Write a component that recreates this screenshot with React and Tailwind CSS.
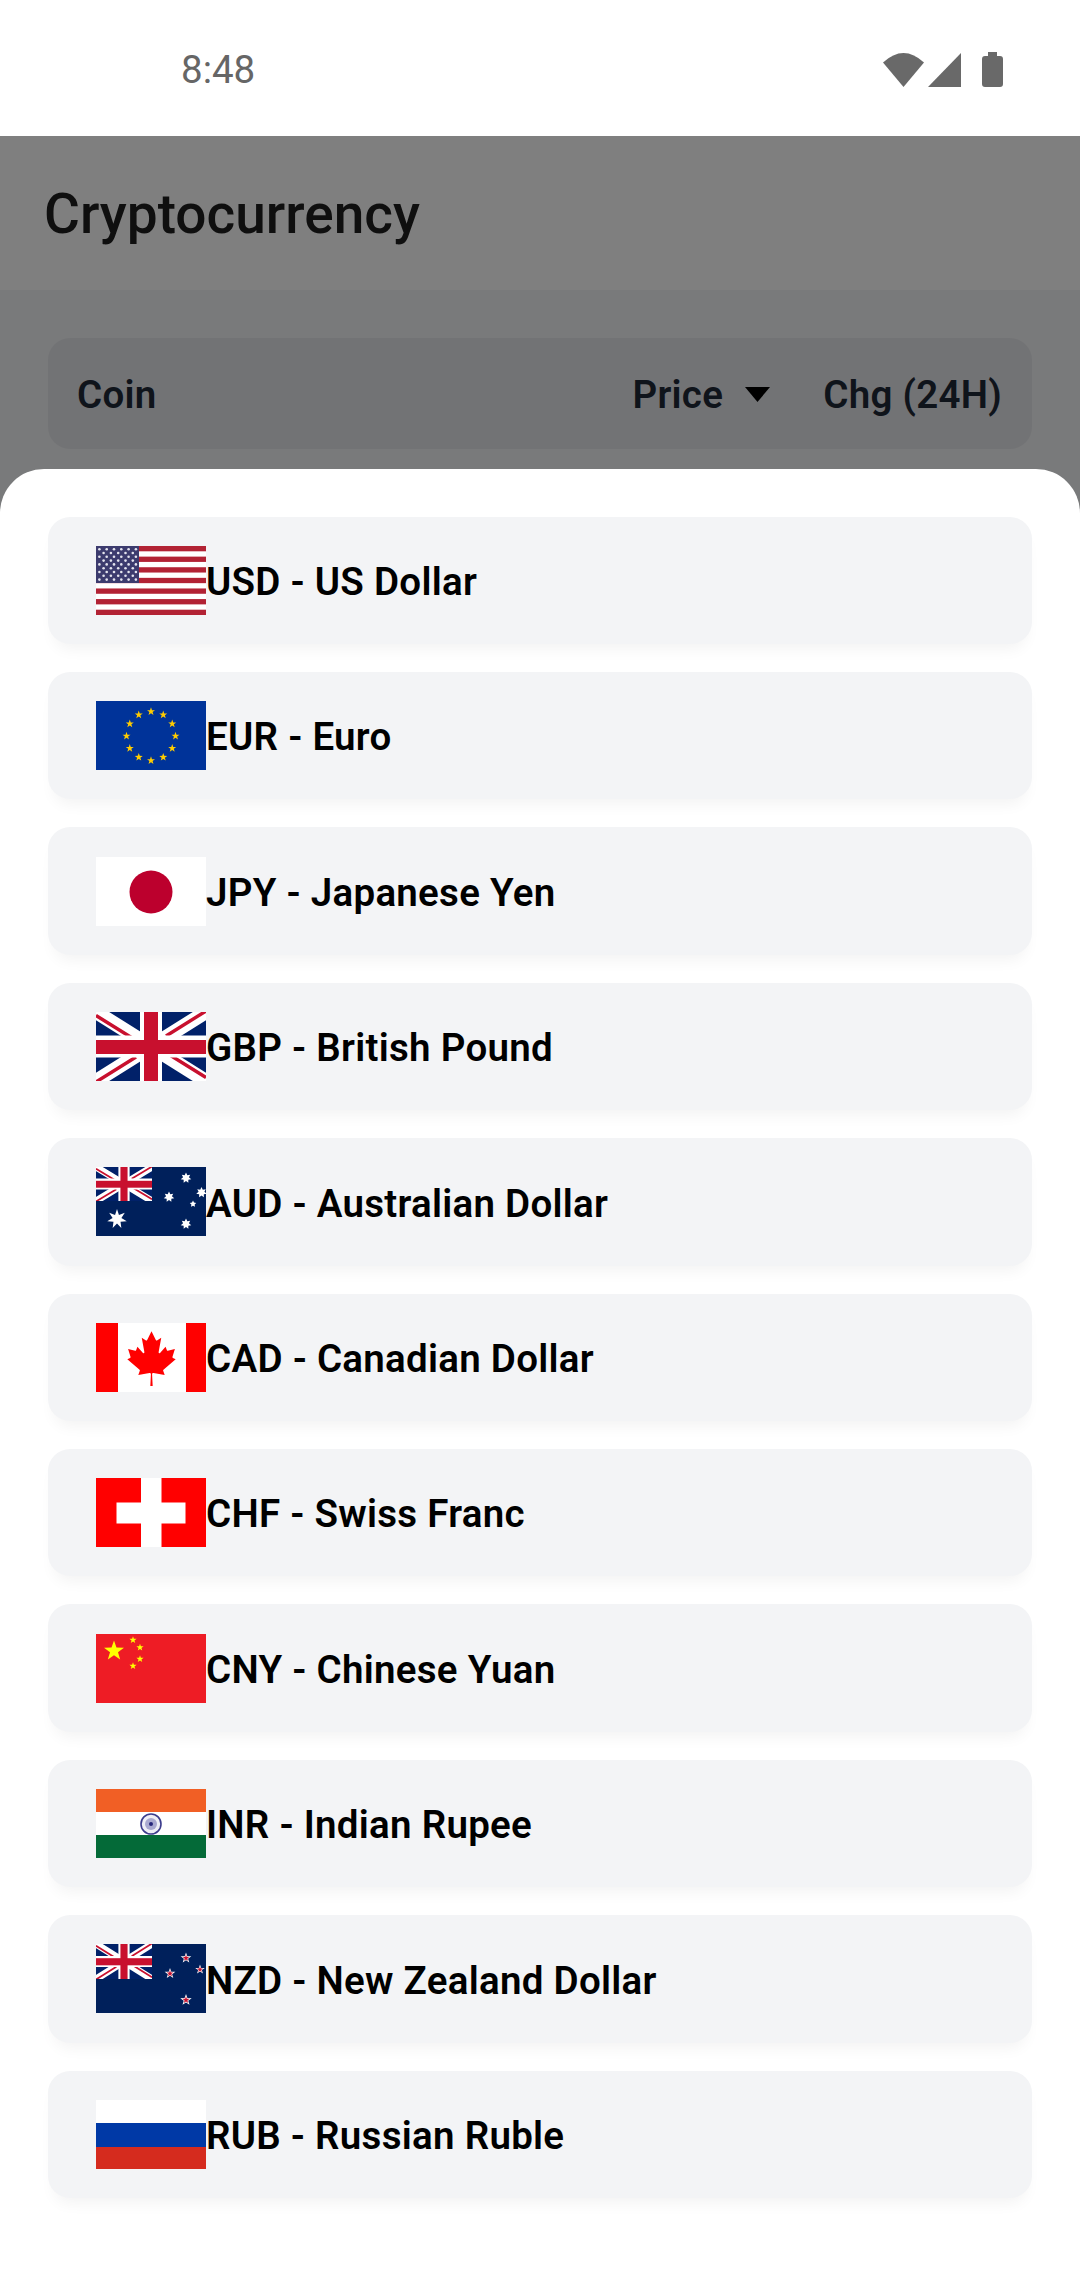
import React from "react";

const star = (cx, cy, r, n = 5, inner = 0.4) => {
  const pts = [];
  for (let i = 0; i < n * 2; i++) {
    const rad = i % 2 === 0 ? r : r * inner;
    const a = -Math.PI / 2 + (i * Math.PI) / n;
    pts.push(`${(cx + rad * Math.cos(a)).toFixed(2)},${(cy + rad * Math.sin(a)).toFixed(2)}`);
  }
  return pts.join(" ");
};

const Soft = ({ children }) => <g className="blur-[0.5px]">{children}</g>;

const Jack = ({ w, h }) => (
  <svg x="0" y="0" width={w} height={h} viewBox="0 0 110 69" preserveAspectRatio="none">
    <rect width="110" height="69" fill="#012169" />
    <g className="blur-[0.5px]">
      <path d="M0 0L110 69M110 0L0 69" stroke="#fff" strokeWidth="14" />
      <path d="M0 3.5L41 29M69 40L110 65.5M110 -1L70 24M40 45L0 70" stroke="#C8102E" strokeWidth="3.4" />
      <path d="M55 0V69M0 34.5H110" stroke="#fff" strokeWidth="22" />
      <rect x="48" width="14" height="69" fill="#C8102E" />
      <rect y="28" width="110" height="14" fill="#C8102E" />
    </g>
  </svg>
);

const Svg = ({ children }) => (
  <svg width="110" height="69" viewBox="0 0 110 69" className="block shrink-0">
    {children}
  </svg>
);

const US = () => {
  const dots = [];
  for (let row = 0; row < 9; row++) {
    const n = row % 2 === 0 ? 6 : 5;
    for (let c = 0; c < n; c++) {
      dots.push(<circle key={`${row}-${c}`} cx={(row % 2 === 0 ? 3.4 : 7.6) + c * 7.3} cy={3.2 + row * 3.8} r="1.3" fill="#e4e4ee" />);
    }
  }
  return (
    <Svg>
      <rect width="110" height="69" fill="#fff" />
      <Soft>
        {[0, 2, 4, 6, 8, 10, 12].map((i) => (
          <rect key={i} y={(i * 69) / 13} width="110" height={69 / 13} fill="#B22234" />
        ))}
      </Soft>
      <rect width="43" height="37" fill="#3C3B6E" />
      <Soft>{dots}</Soft>
    </Svg>
  );
};

const EU = () => (
  <Svg>
    <rect width="110" height="69" fill="#003399" />
    <Soft>
      {Array.from({ length: 12 }).map((_, i) => {
        const a = (i * Math.PI) / 6;
        return <polygon key={i} points={star(55 + 24.5 * Math.sin(a), 35 - 24.5 * Math.cos(a), 4.2)} fill="#FFCC00" />;
      })}
    </Soft>
  </Svg>
);

const JP = () => (
  <Svg>
    <rect width="110" height="69" fill="#fff" />
    <circle cx="55" cy="35" r="21.5" fill="#BC002D" />
  </Svg>
);

const GB = () => (
  <Svg>
    <Jack w={110} h={69} />
  </Svg>
);

const AU = () => (
  <Svg>
    <rect width="110" height="69" fill="#00205B" />
    <Jack w={56} h={34} />
    <Soft>
      <polygon points={star(21, 52, 10, 7, 0.45)} fill="#fff" />
      {[[90, 11], [105.5, 25.5], [73, 30], [90, 57]].map(([x, y]) => (
        <polygon key={x + "-" + y} points={star(x, y, 5.4, 7, 0.55)} fill="#fff" />
      ))}
      <polygon points={star(97, 37, 3.4, 5, 0.5)} fill="#fff" />
    </Soft>
  </Svg>
);

const CA = () => (
  <Svg>
    <rect width="110" height="69" fill="#fff" />
    <rect width="22" height="69" fill="#FF0000" />
    <rect x="90" width="20" height="69" fill="#FF0000" />
    <path
      transform="translate(55.5 35.4) scale(0.013 0.0136)"
      fill="#FF0000"
      d="M-90 2030l45-863a95 95 0 0 0-111-98l-859 151 116-320a65 65 0 0 0-20-73l-941-762 212-99a65 65 0 0 0 34-79l-186-572 542 115a65 65 0 0 0 73-38l105-247 423 454a65 65 0 0 0 111-57l-204-1052 327 189a65 65 0 0 0 91-27l332-652 332 652a65 65 0 0 0 91 27l327-189-204 1052a65 65 0 0 0 111 57l423-454 105 247a65 65 0 0 0 73 38l542-115-186 572a65 65 0 0 0 34 79l212 99-941 762a65 65 0 0 0-20 73l116 320-859-151a95 95 0 0 0-111 98l45 863z"
    />
  </Svg>
);

const CH = () => (
  <Svg>
    <rect width="110" height="69" fill="#FF0000" />
    <rect x="45" width="20.5" height="69" fill="#fff" />
    <rect x="20.5" y="24.5" width="69" height="21" fill="#fff" />
  </Svg>
);

const CN = () => (
  <Svg>
    <rect width="110" height="69" fill="#EE1C25" />
    <Soft>
      <polygon points={star(18, 17, 10.5)} fill="#FFFF00" />
      {[[37, 6], [44, 13.5], [44, 25], [37, 32]].map(([x, y]) => (
        <polygon key={y} points={star(x, y, 3.8)} fill="#FFFF00" />
      ))}
    </Soft>
  </Svg>
);

const IN = () => (
  <Svg>
    <rect width="110" height="69" fill="#fff" />
    <rect width="110" height="23" fill="#F15F25" />
    <rect y="46" width="110" height="23" fill="#046A38" />
    <circle cx="55" cy="35" r="10" fill="#eeeef6" stroke="#3c3c8c" strokeWidth="1.6" />
    <circle cx="55" cy="35" r="6" fill="#a9a9d0" />
    <circle cx="55" cy="35" r="2" fill="#26267a" />
  </Svg>
);

const NZ = () => (
  <Svg>
    <rect width="110" height="69" fill="#00205B" />
    <Jack w={56} h={35} />
    <Soft>
      {[[90, 14, 5.6], [104, 25.5, 5], [74, 29.5, 5.6], [90, 56, 6]].map(([x, y, r]) => (
        <g key={y}>
          <polygon points={star(x, y, r)} fill="#fff" />
          <polygon points={star(x, y, r * 0.62)} fill="#C8102E" />
        </g>
      ))}
    </Soft>
  </Svg>
);

const RU = () => (
  <Svg>
    <rect width="110" height="23" fill="#fff" />
    <rect y="23" width="110" height="24" fill="#0039A6" />
    <rect y="47" width="110" height="22" fill="#D52B1E" />
  </Svg>
);

const rows = [
  [US, "USD - US Dollar"],
  [EU, "EUR - Euro"],
  [JP, "JPY - Japanese Yen"],
  [GB, "GBP - British Pound"],
  [AU, "AUD - Australian Dollar"],
  [CA, "CAD - Canadian Dollar"],
  [CH, "CHF - Swiss Franc"],
  [CN, "CNY - Chinese Yuan"],
  [IN, "INR - Indian Rupee"],
  [NZ, "NZD - New Zealand Dollar"],
  [RU, "RUB - Russian Ruble"],
];

const StatusIcons = () => (
  <svg width="122" height="36" viewBox="0 0 122 36" className="block" fill="#696969">
    <path d="M2 10.5Q22.5-8.5 43 10.5L22.5 35z" />
    <path d="M47 35L80 1v34z" />
    <path d="M101 7a3 3 0 0 1 3-3h3V0h9v4h3a3 3 0 0 1 3 3v25a3 3 0 0 1-3 3h-15a3 3 0 0 1-3-3z" />
  </svg>
);

export default function App() {
  return (
    <div className="relative h-[2270px] w-[1080px] overflow-hidden bg-[#f3f4f6] font-['Roboto',sans-serif]">
      <div className="flex h-[136px] items-center justify-between bg-white pl-[181px] pr-[77px] pt-[4px]">
        <span className="text-[38.5px] leading-none text-[#666666]">8:48</span>
        <StatusIcons />
      </div>
      <div className="flex h-[154px] items-center bg-white pl-[44px] pt-[2px]">
        <h1 className="text-[55px] font-medium leading-none text-[#1f1f1f]">Cryptocurrency</h1>
      </div>
      <div className="px-[48px] pt-[48px]">
        <div className="flex h-[111px] items-center rounded-[22px] bg-[#e5e7eb] pl-[29px] pr-[30px] pt-[2px] text-[38.5px] font-semibold tracking-[0.28px] text-[#1f2937]">
          <span className="flex-1">Coin</span>
          <span>Price</span>
          <svg width="25" height="15" viewBox="0 0 25 15" className="ml-[22px] mr-[53px]">
            <path d="M0 0h25L12.5 15z" fill="#000" />
          </svg>
          <span>Chg (24H)</span>
        </div>
      </div>
      <div className="absolute inset-x-0 bottom-0 top-[136px] bg-black/50" />
      <div className="absolute inset-x-0 bottom-0 top-[469px] flex flex-col gap-[28px] rounded-t-[44px] bg-white px-[48px] pt-[47.6px]">
        {rows.map(([Flag, label]) => (
          <div
            key={label}
            className="flex h-[127.4px] shrink-0 items-center rounded-[22px] bg-[#f3f4f6] px-[48px] shadow-[0_11px_15px_-6px_rgba(0,0,0,0.05)]"
          >
            <Flag />
            <span className="pt-[4px] text-[38.5px] font-semibold leading-none tracking-[0.28px] text-black">{label}</span>
          </div>
        ))}
      </div>
    </div>
  );
}
